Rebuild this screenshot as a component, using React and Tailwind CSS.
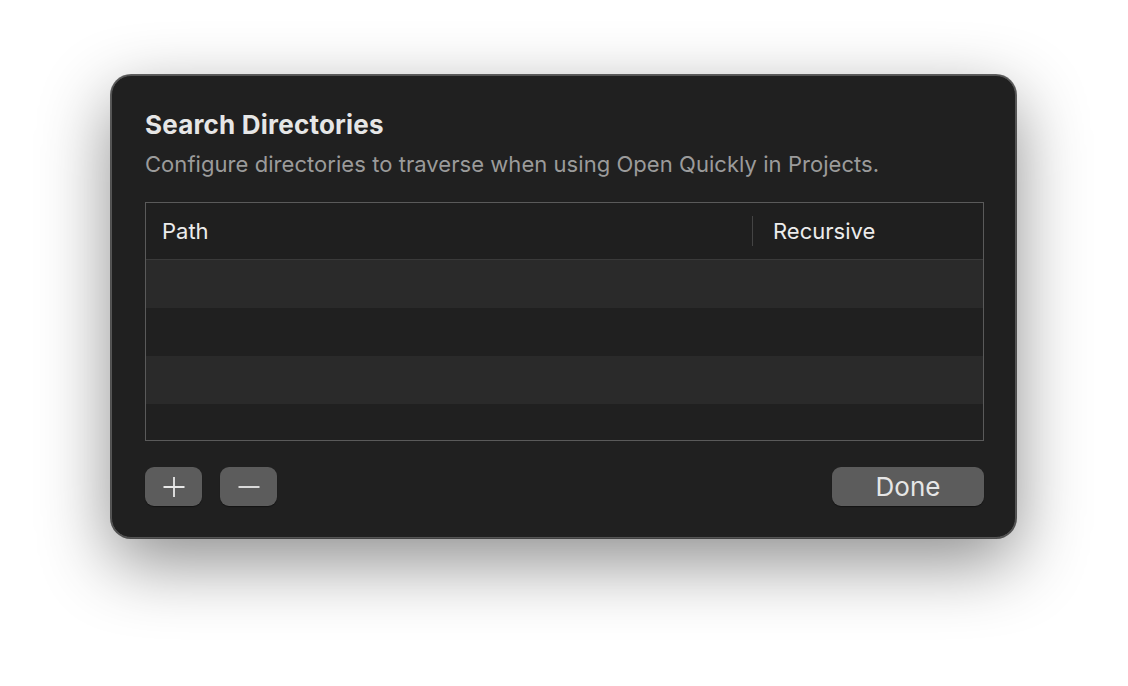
export default function App() {
  const rows = [true, false, true, false];

  return (
    <div className="w-[1128px] h-[686px] bg-white pl-[111px] pt-[75px] font-['Inter',sans-serif]">
      <div className="w-[905px] h-[463px] rounded-[20px] bg-[#202020] border border-[#555] ring-1 ring-black/60 shadow-[0_24px_70px_rgba(0,0,0,0.45)] pl-[33px] pr-[31px] pt-[34px] flex flex-col">
        <h1 className="text-[26px] leading-[30px] font-bold text-[#e6e6e6] tracking-[0.2px]">
          Search Directories
        </h1>
        <p className="mt-[12px] text-[22px] leading-[24px] text-[#9b9b9b] tracking-[0.05px]">
          Configure directories to traverse when using Open Quickly in Projects.
        </p>

        <div className="mt-[26px] h-[239px] border border-[#5a5a5a] flex flex-col overflow-hidden">
          <div className="h-[57px] shrink-0 flex items-center border-b border-[#3a3a3a] bg-[#1f1f1f]">
            <div className="w-[607px] pl-[16px] text-[22px] text-[#ececec] border-r border-[#444] leading-[30px]">
              Path
            </div>
            <div className="pl-[20px] text-[22px] text-[#ececec] leading-[30px]">
              Recursive
            </div>
          </div>
          {rows.map((light, i) => (
            <div
              key={i}
              className={light ? 'h-[48px] shrink-0 bg-[#2a2a2a]' : 'h-[48px] shrink-0 bg-[#202020]'}
            />
          ))}
        </div>

        <div className="mt-[26px] flex items-center">
          <button className="w-[57px] h-[39px] rounded-[9px] bg-[#5c5c5c] flex items-center justify-center shadow-[0_1px_1px_rgba(0,0,0,0.4)]">
            <svg width="22" height="22" viewBox="0 0 22 22">
              <path d="M11 1v20M0.5 11h21" stroke="#e8e8e8" strokeWidth="1.8" />
            </svg>
          </button>
          <button className="ml-[18px] w-[57px] h-[39px] rounded-[9px] bg-[#5c5c5c] flex items-center justify-center shadow-[0_1px_1px_rgba(0,0,0,0.4)]">
            <svg width="22" height="22" viewBox="0 0 22 22">
              <path d="M0.5 11h21" stroke="#e8e8e8" strokeWidth="1.8" />
            </svg>
          </button>
          <button className="ml-auto w-[152px] h-[39px] rounded-[9px] bg-[#5c5c5c] text-[26px] text-[#e6e6e6] leading-none shadow-[0_1px_1px_rgba(0,0,0,0.4)]">
            Done
          </button>
        </div>
      </div>
    </div>
  );
}
